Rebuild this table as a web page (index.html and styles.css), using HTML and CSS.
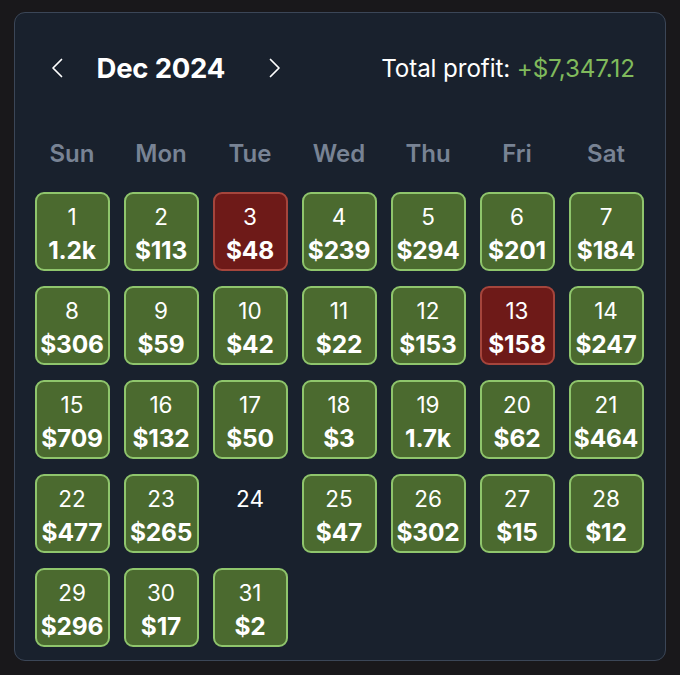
FILE: index.html
```html
<!DOCTYPE html>
<html lang="en">
<head>
<meta charset="utf-8">
<title>Calendar</title>
<link rel="stylesheet" href="styles.css">
</head>
<body>
<div class="wrap">
  <div class="card">
    <div class="header">
      <div class="nav">
        <button class="chev prev" aria-label="Previous month">
          <svg width="12" height="20" viewBox="0 0 12 20"><path d="M10.5 1.5 L2 10 L10.5 18.5" fill="none" stroke="#ffffff" stroke-width="1.7" stroke-linecap="round" stroke-linejoin="round"/></svg>
        </button>
        <div class="month">Dec 2024</div>
        <button class="chev next" aria-label="Next month">
          <svg width="12" height="20" viewBox="0 0 12 20"><path d="M1.5 1.5 L10 10 L1.5 18.5" fill="none" stroke="#ffffff" stroke-width="1.7" stroke-linecap="round" stroke-linejoin="round"/></svg>
        </button>
      </div>
      <div class="total">Total profit: <span class="pos">+$7,347.12</span></div>
    </div>
    <div class="weekdays">
      <div>Sun</div><div>Mon</div><div>Tue</div><div>Wed</div><div>Thu</div><div>Fri</div><div>Sat</div>
    </div>
    <div class="grid">
      <div class="day win"><span class="n">1</span><span class="v">1.2k</span></div>
      <div class="day win"><span class="n">2</span><span class="v">$113</span></div>
      <div class="day loss"><span class="n">3</span><span class="v">$48</span></div>
      <div class="day win"><span class="n">4</span><span class="v">$239</span></div>
      <div class="day win"><span class="n">5</span><span class="v">$294</span></div>
      <div class="day win"><span class="n">6</span><span class="v">$201</span></div>
      <div class="day win"><span class="n">7</span><span class="v">$184</span></div>

      <div class="day win"><span class="n">8</span><span class="v">$306</span></div>
      <div class="day win"><span class="n">9</span><span class="v">$59</span></div>
      <div class="day win"><span class="n">10</span><span class="v">$42</span></div>
      <div class="day win"><span class="n">11</span><span class="v">$22</span></div>
      <div class="day win"><span class="n">12</span><span class="v">$153</span></div>
      <div class="day loss"><span class="n">13</span><span class="v">$158</span></div>
      <div class="day win"><span class="n">14</span><span class="v">$247</span></div>

      <div class="day win"><span class="n">15</span><span class="v">$709</span></div>
      <div class="day win"><span class="n">16</span><span class="v">$132</span></div>
      <div class="day win"><span class="n">17</span><span class="v">$50</span></div>
      <div class="day win"><span class="n">18</span><span class="v">$3</span></div>
      <div class="day win"><span class="n">19</span><span class="v">1.7k</span></div>
      <div class="day win"><span class="n">20</span><span class="v">$62</span></div>
      <div class="day win"><span class="n">21</span><span class="v">$464</span></div>

      <div class="day win"><span class="n">22</span><span class="v">$477</span></div>
      <div class="day win"><span class="n">23</span><span class="v">$265</span></div>
      <div class="day empty"><span class="n">24</span></div>
      <div class="day win"><span class="n">25</span><span class="v">$47</span></div>
      <div class="day win"><span class="n">26</span><span class="v">$302</span></div>
      <div class="day win"><span class="n">27</span><span class="v">$15</span></div>
      <div class="day win"><span class="n">28</span><span class="v">$12</span></div>

      <div class="day win"><span class="n">29</span><span class="v">$296</span></div>
      <div class="day win"><span class="n">30</span><span class="v">$17</span></div>
      <div class="day win"><span class="n">31</span><span class="v">$2</span></div>
    </div>
  </div>
</div>
</body>
</html>
```

FILE: styles.css
```css
* { box-sizing: border-box; }
html, body { margin: 0; padding: 0; }
body {
  background: #19181b;
  font-family: Inter, "Noto Sans", "Liberation Sans", sans-serif;
  color: #ffffff;
}
.wrap {
  padding: 12px 14px 14px 14px;
}
.card {
  height: 649px;
  border: 1.5px solid #3b4657;
  border-radius: 11px;
  background: #19212d;
  padding: 0 0 0 19.5px;
}
.header {
  display: flex;
  align-items: center;
  justify-content: space-between;
  height: 56px;
  margin-top: 27px;
  padding: 0 30px 0 16px;
}
.nav {
  display: flex;
  align-items: center;
}
.chev {
  background: none;
  border: none;
  padding: 0;
  width: 12px;
  height: 20px;
  display: flex;
  align-items: center;
  justify-content: center;
}
.month {
  font-size: 27.5px;
  font-weight: 700;
  letter-spacing: -0.2px;
  margin: 0 44px 0 34px;
}
.total {
  font-size: 24.2px;
  font-weight: 400;
  letter-spacing: -0.1px;
  color: #ffffff;
}
.pos { color: #80ba5c; }
.weekdays {
  display: grid;
  grid-template-columns: repeat(7, 75px);
  column-gap: 14px;
  margin-top: 43px;
  height: 22px;
  align-items: center;
  font-size: 24px;
  font-weight: 600;
  color: #788394;
  text-align: center;
}
.grid {
  display: grid;
  grid-template-columns: repeat(7, 75px);
  grid-auto-rows: 79px;
  column-gap: 14px;
  row-gap: 15px;
  margin-top: 31px;
}
.day {
  border-radius: 9px;
  display: flex;
  flex-direction: column;
  align-items: center;
  padding-top: 9px;
}
.win {
  background: #4b6a2f;
  border: 2px solid #8fc56c;
}
.loss {
  background: #6e1a18;
  border: 2px solid #a5453c;
}
.empty {
  border: 2px solid transparent;
}
.n {
  font-size: 22.5px;
  font-weight: 400;
  line-height: 28px;
}
.v {
  font-size: 24.5px;
  font-weight: 700;
  line-height: 30px;
  margin-top: 4px;
  letter-spacing: -0.2px;
}
```
